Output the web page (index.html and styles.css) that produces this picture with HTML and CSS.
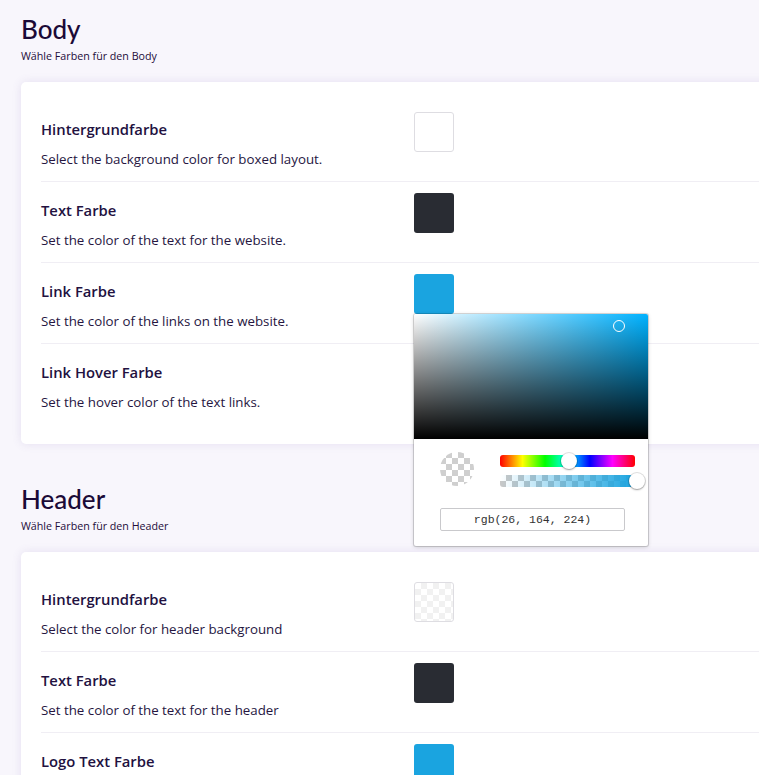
FILE: index.html
```html
<!DOCTYPE html>
<html lang="de">
<head>
<meta charset="utf-8">
<title>Farben</title>
<link rel="stylesheet" href="styles.css">
</head>
<body>
<main class="page">
  <section class="section">
    <h2 class="section-title">Body</h2>
    <p class="section-sub">Wähle Farben für den Body</p>
    <div class="card">
      <div class="row">
        <div class="row-text">
          <div class="label">Hintergrundfarbe</div>
          <div class="desc">Select the background color for boxed layout.</div>
        </div>
        <div class="swatch-wrap"><div class="swatch swatch-white"></div></div>
      </div>
      <div class="row">
        <div class="row-text">
          <div class="label">Text Farbe</div>
          <div class="desc">Set the color of the text for the website.</div>
        </div>
        <div class="swatch-wrap"><div class="swatch swatch-dark"></div></div>
      </div>
      <div class="row">
        <div class="row-text">
          <div class="label">Link Farbe</div>
          <div class="desc">Set the color of the links on the website.</div>
        </div>
        <div class="swatch-wrap">
          <div class="swatch swatch-blue"></div>
          <div class="picker">
            <div class="picker-area">
              <span class="area-cursor"></span>
            </div>
            <div class="picker-body">
              <div class="picker-controls">
                <div class="preview"></div>
                <div class="sliders">
                  <div class="hue"><span class="thumb thumb-hue"></span></div>
                  <div class="alpha"><span class="thumb thumb-alpha"></span></div>
                </div>
              </div>
              <div class="picker-input">rgb(26, 164, 224)</div>
            </div>
          </div>
        </div>
      </div>
      <div class="row">
        <div class="row-text">
          <div class="label">Link Hover Farbe</div>
          <div class="desc">Set the hover color of the text links.</div>
        </div>
        <div class="swatch-wrap"></div>
      </div>
    </div>
  </section>

  <section class="section">
    <h2 class="section-title">Header</h2>
    <p class="section-sub">Wähle Farben für den Header</p>
    <div class="card">
      <div class="row">
        <div class="row-text">
          <div class="label">Hintergrundfarbe</div>
          <div class="desc">Select the color for header background</div>
        </div>
        <div class="swatch-wrap"><div class="swatch swatch-transparent"></div></div>
      </div>
      <div class="row">
        <div class="row-text">
          <div class="label">Text Farbe</div>
          <div class="desc">Set the color of the text for the header</div>
        </div>
        <div class="swatch-wrap"><div class="swatch swatch-dark"></div></div>
      </div>
      <div class="row">
        <div class="row-text">
          <div class="label">Logo Text Farbe</div>
          <div class="desc">Set the color of the logo text</div>
        </div>
        <div class="swatch-wrap"><div class="swatch swatch-blue"></div></div>
      </div>
    </div>
  </section>
</main>
</body>
</html>
```

FILE: styles.css
```css
* { box-sizing: border-box; }

html, body {
  margin: 0;
  padding: 0;
  background: #f8f6fc;
  overflow: hidden;
}

body {
  font-family: "Open Sans", "Lato", "Liberation Sans", sans-serif;
  color: #1e0d3b;
}

.page {
  padding: 13px 0 0 21px;
}

.section {
  margin-bottom: 39px;
}

.section-title {
  margin: 0;
  font-family: "Lato", "Open Sans", sans-serif;
  font-size: 26px;
  line-height: 32px;
  font-weight: 500;
  color: #1b0a37;
}

.section-sub {
  margin: 4px 0 19px;
  font-size: 10.7px;
  line-height: 14px;
}

.card {
  background: #fff;
  border-radius: 5px;
  box-shadow: 0 0 10px rgba(110, 90, 170, 0.14);
  padding: 19px 0 20px 20px;
  margin-right: -40px;
}

.row {
  display: grid;
  grid-template-columns: 373px 40px;
  padding: 11px 0 12px;
  border-bottom: 1px solid #f0eef4;
}

.row:last-child {
  border-bottom: none;
}

.row-text {
  padding-top: 7px;
}

.label {
  font-size: 14.8px;
  line-height: 20px;
  font-weight: 600;
  color: #22113f;
}

.desc {
  margin-top: 10px;
  font-size: 13.3px;
  line-height: 20px;
  color: #26163f;
}

.swatch-wrap {
  position: relative;
  width: 40px;
  height: 40px;
}

.swatch {
  width: 40px;
  height: 40px;
  border-radius: 3px;
}

.swatch-white {
  background: #fff;
  border: 1px solid #dedde2;
}

.swatch-dark {
  background: #292c33;
}

.swatch-blue {
  background: #1aa4e0;
}

.swatch-transparent {
  border: 1px solid #dedde2;
  background: repeating-conic-gradient(#f1f1f1 0 25%, #fff 0 50%) 0 0 / 12px 12px;
}

/* Color picker popover */
.picker {
  position: absolute;
  top: 40px;
  left: 0;
  z-index: 5;
  width: 234px;
  background: #fff;
  border-radius: 2px;
  box-shadow: 0 0 0 1px rgba(0, 0, 0, 0.14), 0 1px 4px rgba(0, 0, 0, 0.18);
  overflow: hidden;
}

.picker-area {
  position: relative;
  height: 125px;
  background:
    linear-gradient(to top, #000, rgba(0, 0, 0, 0)),
    linear-gradient(to right, #fff, #00b2ff);
}

.area-cursor {
  position: absolute;
  left: 199px;
  top: 6px;
  width: 12px;
  height: 12px;
  border: 1.5px solid #fff;
  border-radius: 50%;
}

.picker-body {
  padding: 13px 12px 15px 26px;
}

.picker-controls {
  display: flex;
  align-items: flex-start;
}

.preview {
  width: 34px;
  height: 34px;
  border-radius: 50%;
  background: repeating-conic-gradient(#cfcfcf 0 25%, #fff 0 50%) 0 0 / 12px 12px;
}

.sliders {
  margin-left: 26px;
  padding-top: 3px;
  width: 135px;
  display: flex;
  flex-direction: column;
  gap: 8px;
}

.hue,
.alpha {
  position: relative;
  height: 12px;
  border-radius: 3px;
}

.hue {
  background: linear-gradient(to right, #f00, #ff0, #0f0, #0ff, #00f, #f0f, #f00);
}

.alpha {
  background:
    linear-gradient(to right, rgba(26, 164, 224, 0), rgb(26, 164, 224)),
    repeating-conic-gradient(#c8c8c8 0 25%, #fff 0 50%) 0 0 / 12px 12px;
}

.thumb {
  position: absolute;
  top: 50%;
  width: 16px;
  height: 16px;
  margin: -8px 0 0 -8px;
  border-radius: 50%;
  background: #fff;
  box-shadow: 0 0 0 1px rgba(0, 0, 0, 0.12), 0 1px 2px rgba(0, 0, 0, 0.3);
}

.thumb-hue { left: 69px; }
.thumb-alpha { left: 137px; }

.picker-input {
  margin-top: 21px;
  width: 185px;
  height: 23px;
  border: 1px solid #c9c9cc;
  border-radius: 2px;
  font-family: "Liberation Mono", "Courier New", monospace;
  font-size: 11.5px;
  line-height: 21px;
  text-align: center;
  color: #333;
}
```
